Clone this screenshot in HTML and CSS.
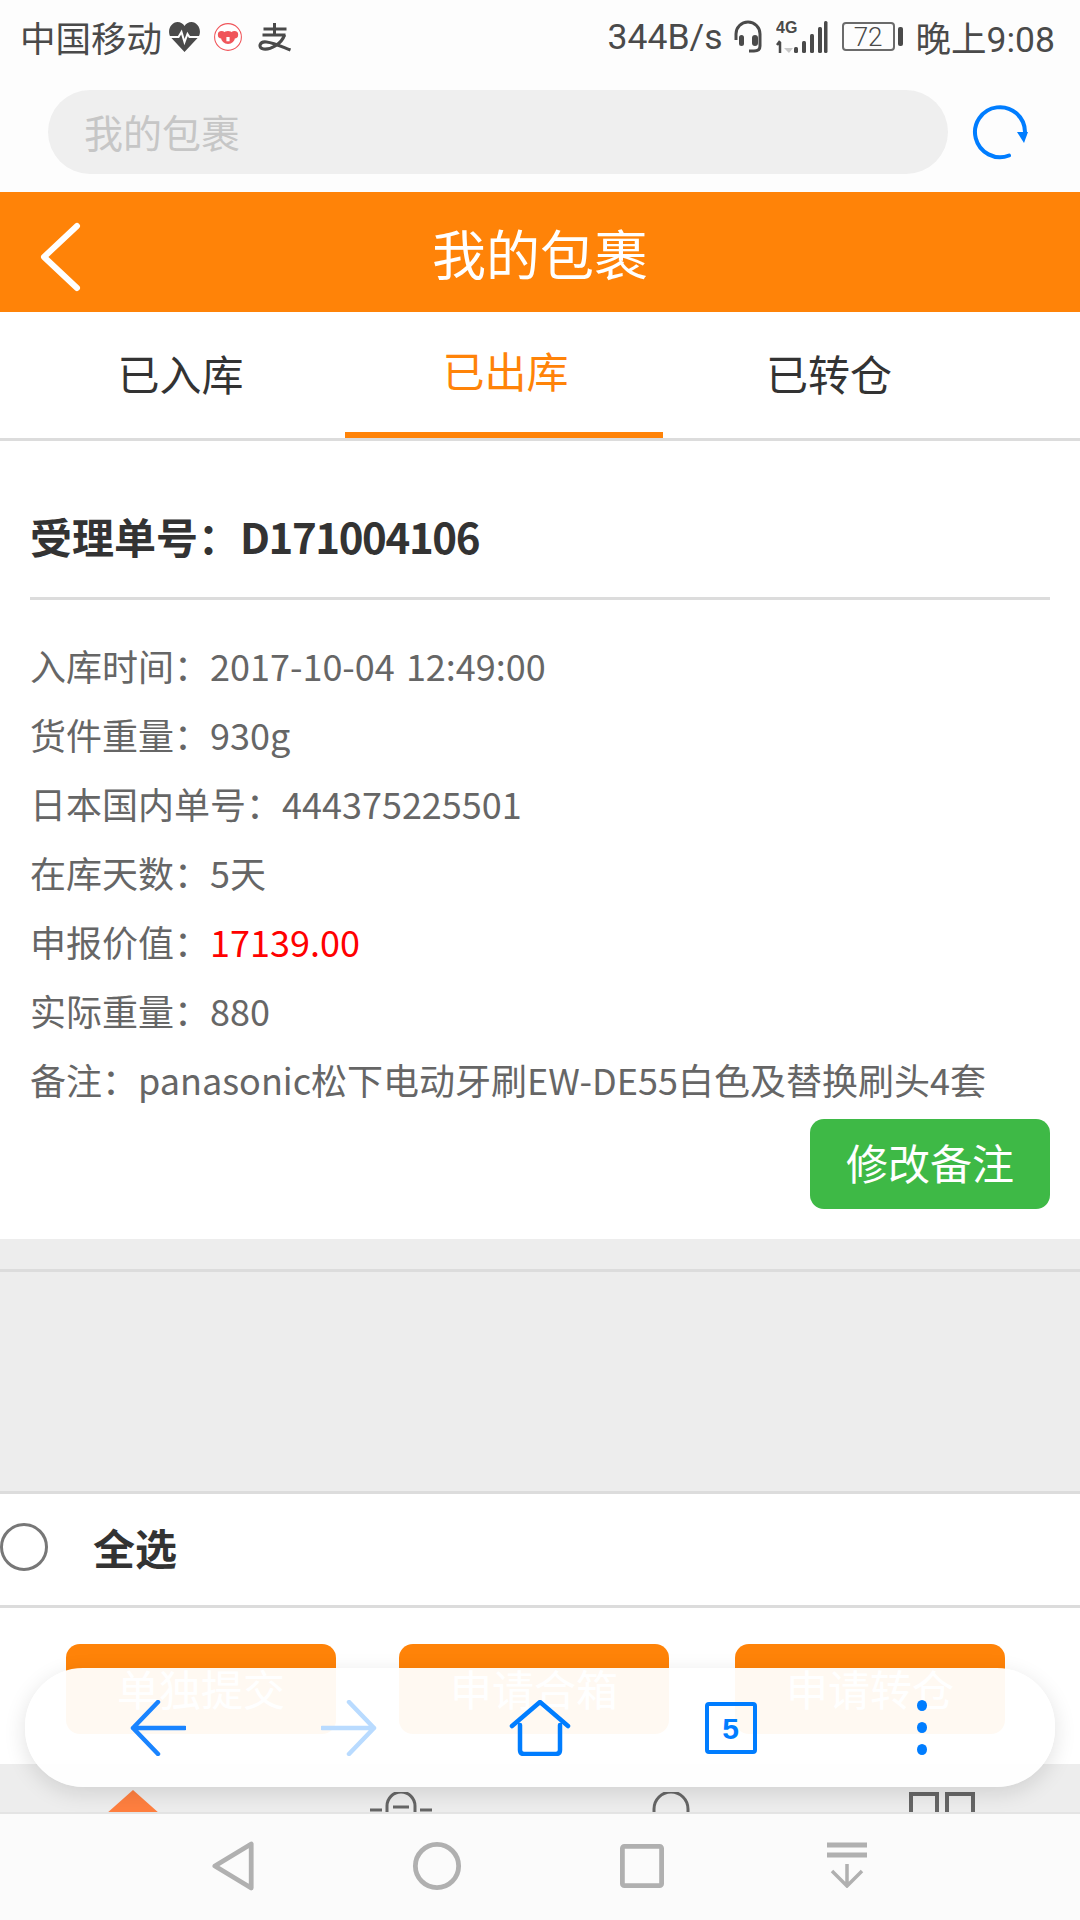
FILE: index.html
```html
<!DOCTYPE html>
<html lang="zh-CN">
<head>
    <meta charset="UTF-8">
    <meta name="viewport" content="width=device-width, initial-scale=1.0">
    <title>我的包裹</title>
    <link rel="stylesheet" href="styles.css">
</head>
<body>
    <div class="page">
        <div class="status-bar">
            <div class="status-left">
                <span class="carrier">中国移动</span>
                <svg class="icon-heart" width="33" height="32" viewBox="0 0 32 32">
                    <path d="M16 31 L2 16 C-2 9 3 1 9 1 C12 1 15 3 16 5 C17 3 20 1 23 1 C29 1 34 9 30 16 Z" fill="#4a4a4a"/>
                    <path d="M1 16 H10 L13 11 L16 21 L19 13 L21 16 H31" fill="none" stroke="#fdfdfd" stroke-width="2"/>
                </svg>
                <span class="koala-badge">
                    <svg width="30" height="30" viewBox="0 0 28 28">
                        <circle cx="14" cy="14" r="12.5" fill="#fff" stroke="#f0555a" stroke-width="1"/>
                        <circle cx="8" cy="12" r="3.5" fill="#f0555a"/>
                        <circle cx="20" cy="12" r="3.5" fill="#f0555a"/>
                        <ellipse cx="14" cy="14.5" rx="6.5" ry="6" fill="#f0555a"/>
                        <rect x="12.5" y="14" width="3" height="4" fill="#fff"/>
                    </svg>
                </span>
                <svg class="icon-pay" width="35" height="30" viewBox="0 0 34 30">
                    <path d="M6 7 H29 M17 1 V13 M5 13 H28" fill="none" stroke="#4a4a4a" stroke-width="3"/>
                    <path d="M27 13 C24 22 13 28 6 27 C0 26 2 19 9 20 C17 21 25 25 33 28" fill="none" stroke="#4a4a4a" stroke-width="3.2"/>
                </svg>
            </div>
            <div class="status-right">
                <span class="net-speed">344B/s</span>
                <svg class="icon-headset" width="30" height="34" viewBox="0 0 30 34">
                    <path d="M3 20 V14 A12 12 0 0 1 27 14 V26 Q27 31 21 31 H16" fill="none" stroke="#4a4a4a" stroke-width="3"/>
                    <rect x="6" y="15" width="5" height="11" rx="2.5" fill="#4a4a4a"/>
                    <rect x="19" y="15" width="6" height="11" rx="3" fill="#4a4a4a"/>
                </svg>
                <svg class="icon-signal" width="52" height="34" viewBox="0 0 52 34">
                    <text class="net-label" x="0" y="13">4G</text>
                    <path d="M4 22 V33 M1 25 L4 21" stroke="#4a4a4a" stroke-width="2.5" fill="none"/>
                    <path d="M12 22 V28 H8 L13 33 L17 28 H12" fill="#c8c8c8"/>
                    <rect x="18" y="27" width="4" height="6" rx="1.5" fill="#4a4a4a"/>
                    <rect x="26" y="21" width="4" height="12" rx="1.5" fill="#4a4a4a"/>
                    <rect x="34" y="14" width="4" height="19" rx="1.5" fill="#4a4a4a"/>
                    <rect x="42" y="7" width="4" height="26" rx="1.5" fill="#4a4a4a"/>
                    <rect x="48" y="1" width="3.5" height="32" rx="1.5" fill="#4a4a4a"/>
                </svg>
                <span class="battery"><span class="battery-level">72</span></span>
                <span class="clock">晚上9:08</span>
            </div>
        </div>

        <div class="address-bar">
            <div class="address-input">我的包裹</div>
            <svg class="reload" width="60" height="60" viewBox="0 0 60 60">
                <path d="M39 53.5 A25 25 0 1 1 55 30" fill="none" stroke="#007dff" stroke-width="4" stroke-linecap="round"/>
                <path d="M47 30 L58 30 L54 41 Z" fill="#007dff"/>
            </svg>
        </div>

        <div class="title-bar">
            <svg class="back" width="44" height="72" viewBox="0 0 44 72">
                <path d="M39 5 L6 36 L39 67" fill="none" stroke="#fff" stroke-width="6" stroke-linecap="round" stroke-linejoin="round"/>
            </svg>
            <h1>我的包裹</h1>
        </div>

        <div class="tabs">
            <div class="tab tab-in">已入库</div>
            <div class="tab active">已出库</div>
            <div class="tab tab-move">已转仓</div>
        </div>

        <div class="order">
            <h2 class="order-title">受理单号：<span class="order-no">D171004106</span></h2>
            <ul class="order-info">
                <li>入库时间：2017-10-04 12:49:00</li>
                <li>货件重量：930g</li>
                <li>日本国内单号：444375225501</li>
                <li>在库天数：5天</li>
                <li>申报价值：<span class="price">17139.00</span></li>
                <li>实际重量：880</li>
                <li>备注：panasonic松下电动牙刷EW-DE55白色及替换刷头4套</li>
            </ul>
            <div class="order-actions">
                <a href="#" class="btn-note">修改备注</a>
            </div>
        </div>

        <div class="gap"></div>

        <div class="select-all">
            <span class="radio"></span>
            <span class="select-label">全选</span>
        </div>

        <div class="actions">
            <a href="#" class="btn-submit">单独提交</a>
            <a href="#" class="btn-submit">申请合箱</a>
            <a href="#" class="btn-submit">申请转仓</a>
        </div>

        <!-- site menu, mostly hidden behind the system bar -->
        <div class="site-menu">
            <svg class="menu-home" width="54" height="22" viewBox="0 0 54 22"><path d="M27 0 L54 24 H0 Z" fill="#ff7f3f"/></svg>
            <svg width="62" height="20" viewBox="0 0 62 20">
                <path d="M17 20 V14 A14 14 0 0 1 45 14 V20" fill="none" stroke="#666" stroke-width="3"/>
                <path d="M0 18 H12 M50 18 H62 M23 15 H39" fill="none" stroke="#666" stroke-width="3"/>
            </svg>
            <svg width="38" height="20" viewBox="0 0 38 20"><path d="M2 20 V17 A17 17 0 0 1 36 17 V20" fill="none" stroke="#666" stroke-width="3"/></svg>
            <svg width="66" height="20" viewBox="0 0 66 20"><path d="M2 20 V2 H28 V20 M38 20 V2 H64 V20" fill="none" stroke="#666" stroke-width="4"/></svg>
        </div>

        <div class="system-nav">
            <svg width="44" height="50" viewBox="0 0 46 52"><path d="M41 3 V49 L3 26 Z" fill="none" stroke="#b0b0b0" stroke-width="5" stroke-linejoin="round"/></svg>
            <svg width="50" height="50" viewBox="0 0 52 52"><circle cx="26" cy="26" r="22.5" fill="none" stroke="#b0b0b0" stroke-width="5"/></svg>
            <svg class="nav-square" width="44" height="44" viewBox="0 0 46 46"><rect x="2.5" y="2.5" width="41" height="41" rx="2" fill="none" stroke="#b0b0b0" stroke-width="5"/></svg>
            <svg class="nav-drop" width="42" height="46" viewBox="0 0 42 46">
                <path d="M1 3 H41 M1 13 H41" stroke="#b0b0b0" stroke-width="5" fill="none"/>
                <path d="M21 22 V44 M6 29 L21 44 L36 29" stroke="#b0b0b0" stroke-width="3.5" fill="none"/>
            </svg>
        </div>

        <!-- browser's floating toolbar -->
        <div class="browser-bar">
            <svg width="56" height="56" viewBox="0 0 56 56">
                <path d="M28 2 L3 28 L28 54 M3 28 H55" fill="none" stroke="#1a84ff" stroke-width="4.5" stroke-linecap="round" stroke-linejoin="round"/>
            </svg>
            <svg width="56" height="56" viewBox="0 0 56 56">
                <path d="M28 2 L53 28 L28 54 M53 28 H1" fill="none" stroke="#b9dbff" stroke-width="4.5" stroke-linecap="round" stroke-linejoin="round"/>
            </svg>
            <svg width="62" height="56" viewBox="0 0 62 56">
                <path d="M3 26 L31 2 L59 26 M11 25 V50 Q11 54 15 54 H47 Q51 54 51 50 V25" fill="none" stroke="#007dff" stroke-width="4.5" stroke-linecap="round" stroke-linejoin="round"/>
            </svg>
            <span class="tab-count">5</span>
            <span class="more-dots"><i></i><i></i><i></i></span>
        </div>
    </div>
</body>
</html>
```

FILE: styles.css
```css
* {
    margin: 0;
    padding: 0;
    box-sizing: border-box;
}

body {
    font-family: "Noto Sans CJK SC", "Noto Sans", sans-serif;
    background: #fff;
}

.page {
    position: relative;
    width: 1080px;
    height: 1920px;
    overflow: hidden;
    display: flex;
    flex-direction: column;
}

/* status bar */
.status-bar {
    height: 78px;
    background: #fdfdfd;
    color: #4a4a4a;
    display: flex;
    justify-content: space-between;
    align-items: center;
    padding: 0 25px 5px 20px;
}

.status-left,
.status-right {
    display: flex;
    align-items: center;
}

.carrier {
    font-size: 35.5px;
    line-height: 40px;
}

.icon-heart {
    margin-left: 6px;
}

.koala-badge {
    display: flex;
    margin-left: 12px;
}

.icon-pay {
    margin-left: 14px;
}

.net-speed {
    font-family: Roboto, sans-serif;
    font-size: 35.5px;
    margin-right: 10px;
}

.net-label {
    font-family: "Liberation Sans", sans-serif;
    font-size: 16px;
    font-weight: 700;
    fill: #4a4a4a;
}

.icon-headset {
    margin-right: 13px;
}

.icon-signal {
    margin-right: 14px;
}

.battery {
    position: relative;
    width: 53px;
    height: 29px;
    border: 2px solid #6b6b6b;
    border-radius: 4px;
    display: flex;
    align-items: center;
    justify-content: center;
    margin-right: 21px;
}

.battery::after {
    content: "";
    position: absolute;
    right: -10px;
    top: 3px;
    width: 5px;
    height: 19px;
    background: #4a4a4a;
    border-radius: 2px;
}

.battery-level {
    font-family: Roboto, sans-serif;
    font-size: 26px;
    font-weight: 300;
}

.clock {
    font-family: Roboto, "Noto Sans CJK SC", sans-serif;
    font-size: 35.5px;
}

/* address bar */
.address-bar {
    height: 114px;
    background: #fdfdfd;
    display: flex;
    align-items: center;
    padding: 0 0 6px 48px;
}

.address-input {
    width: 900px;
    height: 84px;
    line-height: 82px;
    border-radius: 42px;
    background: #efefef;
    color: #c6c6c6;
    font-size: 39px;
    padding-left: 36px;
}

.reload {
    margin-left: 22px;
}

/* orange title */
.title-bar {
    position: relative;
    height: 120px;
    background: #ff8308;
    display: flex;
    align-items: center;
    justify-content: center;
}

.title-bar h1 {
    color: #fff;
    font-size: 54px;
    font-weight: 400;
}

.back {
    position: absolute;
    left: 38px;
    top: 29px;
}

/* tabs */
.tabs {
    height: 129px;
    border-bottom: 3px solid #dcdcdc;
    display: flex;
    padding-left: 19px;
}

.tab {
    height: 126px;
    line-height: 122px;
    text-align: center;
    font-size: 42px;
    color: #333;
}

.tab-in {
    width: 326px;
    padding-right: 3px;
}

.tab-move {
    width: 332px;
}

.tab.active {
    width: 318px;
    padding-left: 3px;
    color: #ff8308;
    line-height: 116px;
    border-bottom: 6px solid #ff8308;
}

/* order card */
.order {
    height: 798px;
    padding: 0 30px;
}

.order-title {
    height: 159px;
    line-height: 190px;
    border-bottom: 3px solid #dcdcdc;
    font-size: 42px;
    font-weight: 700;
    color: #333;
}

.order-no {
    letter-spacing: -1.4px;
}

.order-info {
    list-style: none;
    padding-top: 31px;
}

.order-info li {
    height: 69px;
    line-height: 69px;
    font-size: 36px;
    word-spacing: 3px;
    color: #666;
    white-space: nowrap;
}

.price {
    color: #f00;
}

.order-actions {
    display: flex;
    justify-content: flex-end;
    margin-top: 5px;
}

.btn-note {
    width: 240px;
    height: 90px;
    line-height: 86px;
    text-align: center;
    background: #3eb946;
    color: #fff;
    font-size: 42px;
    border-radius: 14px;
    text-decoration: none;
}

.gap {
    height: 252px;
    padding-top: 30px;
    background: #ededed;
}

.gap::before {
    content: "";
    display: block;
    height: 3px;
    background: #dcdcdc;
}

/* select all row */
.select-all {
    height: 117px;
    border-top: 3px solid #dcdcdc;
    border-bottom: 3px solid #dcdcdc;
    display: flex;
    align-items: center;
    padding: 0 0 6px 0;
}

.radio {
    width: 48px;
    height: 48px;
    border: 3px solid #777;
    border-radius: 50%;
}

.select-label {
    font-size: 42px;
    font-weight: 700;
    color: #333;
    margin-left: 45px;
}

/* submit buttons */
.actions {
    height: 156px;
    padding: 36px 0 0 66px;
    display: grid;
    grid-template-columns: 333px 336px 270px;
    align-items: start;
}

.btn-submit {
    width: 270px;
    height: 90px;
    line-height: 88px;
    text-align: center;
    background: #ff8308;
    color: #fff;
    font-size: 42px;
    border-radius: 14px;
    text-decoration: none;
}

.site-menu {
    height: 48px;
    padding: 28px 0 0 106px;
    background: #ededed;
    display: grid;
    grid-template-columns: 264px 282px 257px 66px;
    align-items: start;
    overflow: hidden;
}

.menu-home {
    margin-top: -2px;
}

.system-nav {
    height: 108px;
    background: #fbfbfb;
    border-top: 2px solid #e4e4e4;
    display: flex;
    align-items: flex-start;
    padding: 27px 0 0 212px;
    gap: 156px;
}

.nav-square {
    margin-top: 3px;
    margin-left: 2px;
}

.nav-drop {
    margin-top: 1px;
    margin-left: 6px;
}

/* floating browser toolbar */
.browser-bar {
    position: absolute;
    left: 25px;
    top: 1668px;
    width: 1030px;
    height: 119px;
    border-radius: 58px;
    background: rgba(255, 255, 255, 0.95);
    box-shadow: 0 6px 22px rgba(0, 0, 0, 0.12);
    display: grid;
    grid-template-columns: repeat(5, 191px);
    justify-items: center;
    align-items: center;
    padding-left: 37px;
}

.tab-count {
    width: 52px;
    height: 52px;
    line-height: 46px;
    border: 4px solid #007dff;
    border-radius: 4px;
    color: #007dff;
    font-family: "Liberation Sans", sans-serif;
    font-size: 30px;
    font-weight: 700;
    text-align: center;
}

.more-dots {
    display: flex;
    flex-direction: column;
    gap: 11px;
}

.more-dots i {
    width: 10px;
    height: 11px;
    border-radius: 50%;
    background: #007dff;
}
```
